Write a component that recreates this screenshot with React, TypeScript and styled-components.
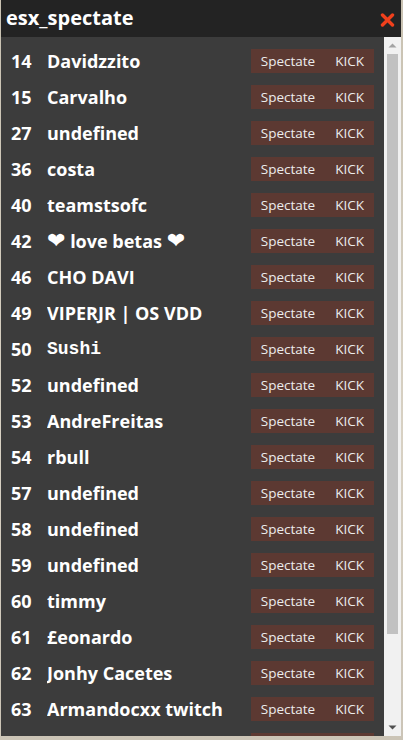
import React from "react";
import styled, { createGlobalStyle } from "styled-components";

interface IPlayer {
  id: number;
  name: string;
  mono?: boolean;
  hearts?: boolean;
}

interface INameProps {
  mono?: boolean;
}

const players: IPlayer[] = [
  { id: 14, name: "Davidzzito" },
  { id: 15, name: "Carvalho" },
  { id: 27, name: "undefined" },
  { id: 36, name: "costa" },
  { id: 40, name: "teamstsofc" },
  { id: 42, name: "love betas", hearts: true },
  { id: 46, name: "CHO DAVI" },
  { id: 49, name: "VIPERJR | OS VDD" },
  { id: 50, name: "Sushi", mono: true },
  { id: 52, name: "undefined" },
  { id: 53, name: "AndreFreitas" },
  { id: 54, name: "rbull" },
  { id: 57, name: "undefined" },
  { id: 58, name: "undefined" },
  { id: 59, name: "undefined" },
  { id: 60, name: "timmy" },
  { id: 61, name: "£eonardo" },
  { id: 62, name: "Jonhy Cacetes" },
  { id: 63, name: "Armandocxx twitch" },
  { id: 64, name: "undefined" },
];

const App: React.FC = () => {
  return (
    <>
      <GlobalStyle />
      <Window>
        <TitleBar>
          <Title>esx_spectate</Title>
          <CloseButton>
            <svg width="15" height="14" viewBox="0 0 15 14">
              <path d="M2.5 2 L12.5 12 M12.5 2 L2.5 12" stroke="#f0401c" strokeWidth="3.4" strokeLinecap="round" />
            </svg>
          </CloseButton>
        </TitleBar>
        <Body>
          <PlayerList>
            {players.map((player) => (
              <Row key={player.id}>
                <PlayerId>{player.id}</PlayerId>
                <PlayerName mono={player.mono}>
                  {player.hearts ? (
                    <>
                      <Heart>{"\u2764\uFE0E"}</Heart> {player.name} <Heart>{"\u2764\uFE0E"}</Heart>
                    </>
                  ) : (
                    player.name
                  )}
                </PlayerName>
                <Actions>
                  <ActionButton>Spectate</ActionButton>
                  <ActionButton>KICK</ActionButton>
                </Actions>
              </Row>
            ))}
          </PlayerList>
          <ScrollBar>
            <ScrollArrow>
              <svg width="9" height="5" viewBox="0 0 9 5">
                <path d="M4.5 0.5 L8.5 4.5 L0.5 4.5 Z" fill="#a3a3a3" />
              </svg>
            </ScrollArrow>
            <ScrollTrack>
              <ScrollThumb />
            </ScrollTrack>
            <ScrollArrow>
              <svg width="9" height="5" viewBox="0 0 9 5">
                <path d="M0.5 0.5 L8.5 0.5 L4.5 4.5 Z" fill="#505050" />
              </svg>
            </ScrollArrow>
          </ScrollBar>
        </Body>
      </Window>
    </>
  );
};

export default App;

const GlobalStyle = createGlobalStyle`
  html, body {
    margin: 0;
    padding: 0;
    background: linear-gradient(180deg, #c9c2b2 0%, #d8d1c3 60%, #cbc4b6 100%);
    height: 740px;
    overflow: hidden;
  }
  * {
    box-sizing: border-box;
  }
`;

const Window = styled.div`
  width: 400px;
  height: 736px;
  margin-left: 1px;
  display: flex;
  flex-direction: column;
  overflow: hidden;
  background-color: #3c3c3c;
  font-family: "Open Sans", "Noto Sans", sans-serif;
  color: #ffffff;
`;

const TitleBar = styled.div`
  height: 37px;
  flex-shrink: 0;
  display: flex;
  align-items: center;
  justify-content: space-between;
  padding: 0 6px 0 5px;
  background-color: #232323;
`;

const Title = styled.span`
  font-size: 20px;
  font-weight: 700;
  line-height: 1;
  margin-top: -2px;
`;

const CloseButton = styled.div`
  display: flex;
  align-items: center;
  cursor: pointer;
  margin-top: 2px;
`;

const Body = styled.div`
  height: 699px;
  display: flex;
`;

const PlayerList = styled.div`
  flex: 1;
  overflow: hidden;
  padding-top: 6px;
`;

const ScrollBar = styled.div`
  width: 17px;
  flex-shrink: 0;
  display: flex;
  flex-direction: column;
  background-color: #f1f1f1;
`;

const ScrollArrow = styled.div`
  height: 17px;
  flex-shrink: 0;
  display: flex;
  align-items: center;
  justify-content: center;
`;

const ScrollTrack = styled.div`
  flex: 1;
  padding: 0 3px 30px 3px;
`;

const ScrollThumb = styled.div`
  height: 580px;
  background-color: #c1c1c1;
`;

const Row = styled.div`
  height: 36px;
  display: flex;
  align-items: center;
  padding: 0 10px 0 10px;
`;

const PlayerId = styled.span`
  width: 36px;
  flex-shrink: 0;
  font-size: 18px;
  font-weight: 700;
`;

const PlayerName = styled.span<INameProps>`
  flex: 1;
  font-size: 18px;
  font-weight: 700;
  font-family: ${(props) =>
    props.mono ? '"Liberation Mono", "Courier New", monospace' : '"Open Sans", "Noto Sans", sans-serif'};
  white-space: nowrap;
  overflow: hidden;
`;

const Heart = styled.span`
  font-family: "DejaVu Sans", sans-serif;
  font-size: 22px;
  font-weight: 400;
  line-height: 1;
  color: #ffffff;
`;

const Actions = styled.div`
  display: flex;
  height: 24px;
  background-color: #5c3932;
`;

const ActionButton = styled.div`
  display: flex;
  align-items: center;
  padding: 0 10px;
  font-size: 13.5px;
  color: #ececec;
  cursor: pointer;
`;
